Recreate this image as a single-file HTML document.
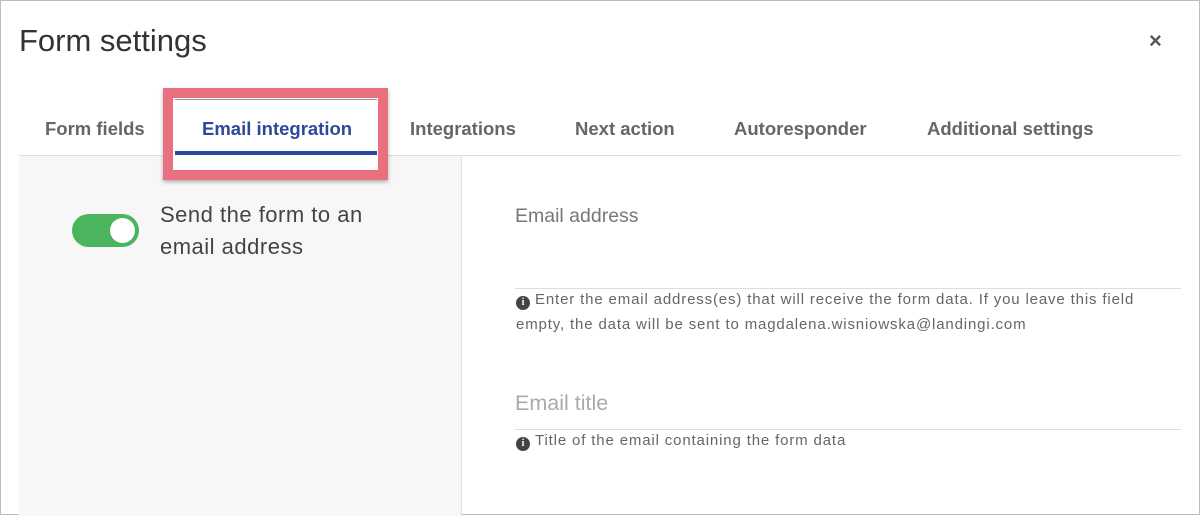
<!DOCTYPE html>
<html><head><style>
body{margin:0;width:1200px;height:515px;overflow:hidden;background:#fff;font-family:"Liberation Sans",sans-serif;position:relative}
.frame{position:absolute;left:0;top:0;width:1198px;height:513px;border:1px solid #bdbdbd}
.abs{position:absolute;white-space:nowrap}
.tab{position:absolute;top:118px;font-size:18.5px;font-weight:bold;color:#666}
.help{font-size:15px;letter-spacing:0.85px;color:#666;line-height:25px}
.i{display:inline-block;width:14px;height:14px;border-radius:50%;background:#444;color:#fff;font-size:10px;font-weight:bold;text-align:center;line-height:14px;vertical-align:-1px;margin-right:5px;letter-spacing:0;font-family:"Liberation Serif",serif}
</style></head><body>
<div class="frame"></div>
<div class="abs" style="left:19px;top:23px;font-size:31px;color:#333">Form settings</div>
<div class="abs" style="left:1149px;top:28px;font-size:22px;font-weight:bold;color:#555">×</div>
<div class="abs" style="left:19px;top:155px;width:1162px;height:1px;background:#ddd"></div>
<div class="abs" style="left:19px;top:156px;width:442px;height:360px;background:#f7f7f7"></div>
<div class="abs" style="left:461px;top:156px;width:1px;height:360px;background:#e2e2e2"></div>
<div class="tab" style="left:45px">Form fields</div>
<div class="tab" style="left:410px">Integrations</div>
<div class="tab" style="left:575px">Next action</div>
<div class="tab" style="left:734px">Autoresponder</div>
<div class="tab" style="left:927px">Additional settings</div>
<div class="abs" style="left:163px;top:88px;width:205px;height:72px;border:10px solid #e8707f;background:#fff;box-shadow:0 2px 4px rgba(0,0,0,.3)"></div>
<div class="abs" style="left:175px;top:99px;width:202px;height:1px;background:#999"></div>
<div class="tab" style="left:202px;color:#2d4a9a">Email integration</div>
<div class="abs" style="left:175px;top:151px;width:202px;height:4px;background:#2b48a0"></div>
<div class="abs" style="left:72px;top:214px;width:67px;height:33px;border-radius:17px;background:#4cb45c"></div>
<div class="abs" style="left:110px;top:218px;width:25px;height:25px;border-radius:50%;background:#fff"></div>
<div class="abs" style="left:160px;top:199px;font-size:22px;letter-spacing:0.5px;color:#444;line-height:32px">Send the form to an<br>email address</div>
<div class="abs" style="left:515px;top:205px;font-size:19.5px;color:#777">Email address</div>
<div class="abs" style="left:515px;top:288px;width:666px;height:1px;background:#ddd"></div>
<div class="abs help" style="left:516px;top:287px"><span class="i">i</span>Enter the email address(es) that will receive the form data. If you leave this field<br>empty, the data will be sent to magdalena.wisniowska@landingi.com</div>
<div class="abs" style="left:515px;top:391px;font-size:21.5px;color:#aaa">Email title</div>
<div class="abs" style="left:515px;top:429px;width:666px;height:1px;background:#ddd"></div>
<div class="abs help" style="left:516px;top:428px"><span class="i">i</span>Title of the email containing the form data</div>
</body></html>
